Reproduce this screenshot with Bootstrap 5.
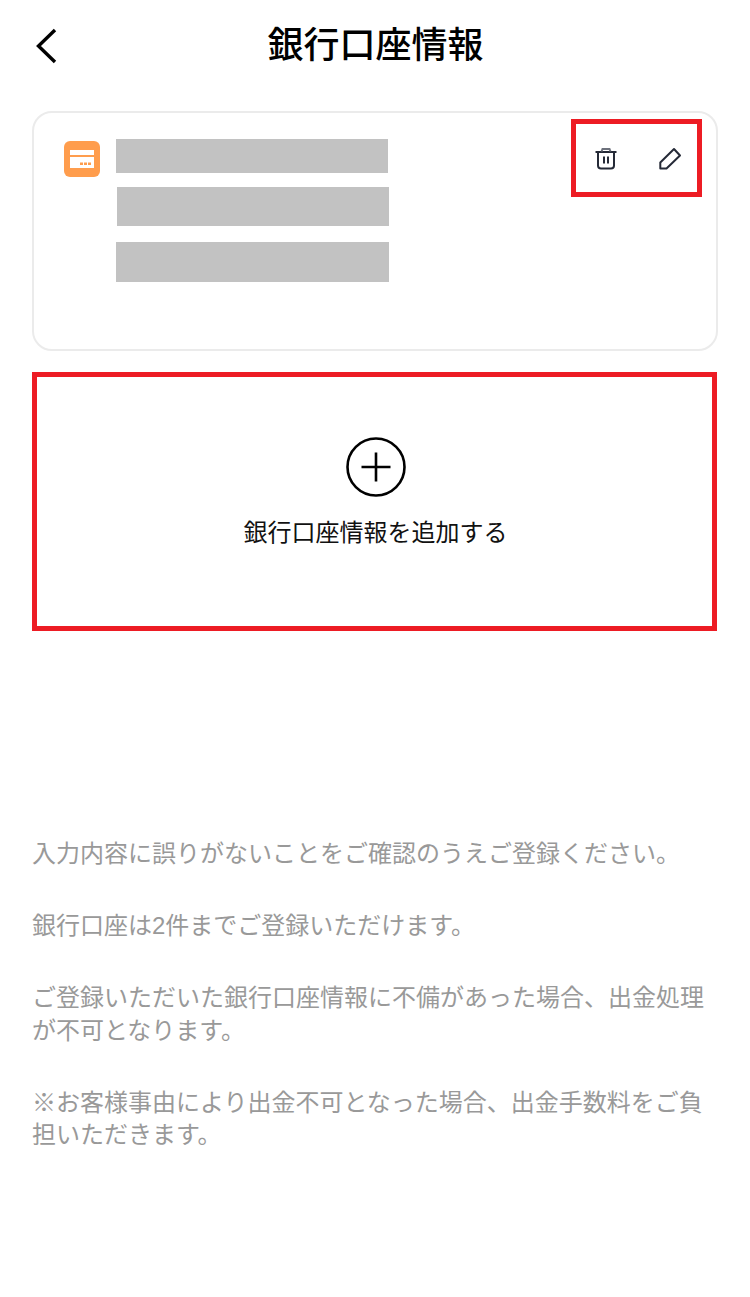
<!DOCTYPE html>
<html lang="ja">
<head>
  <meta charset="UTF-8">
  <meta name="viewport" content="width=device-width, initial-scale=1.0">
  <title>銀行口座情報</title>
  <link href="https://cdn.jsdelivr.net/npm/bootstrap@5.3.0/dist/css/bootstrap.min.css" rel="stylesheet">
  <style>
    body {
      font-family: "Liberation Sans", "Noto Sans CJK JP", sans-serif;
      background: #fff;
      color: #000;
    }
    .page-wrap {
      height: 1297px;
      padding: 0 32px;
    }
    .top-bar {
      height: 111px;
      padding-bottom: 19px;
    }
    .back-link {
      left: 3px;
      top: 27px;
      line-height: 0;
    }
    .page-title {
      font-size: 36px;
      font-weight: 500;
      line-height: 50px;
      margin: 0;
      padding-left: 1px;
    }
    .bank-card {
      height: 240px;
      border: 2px solid #ebebeb;
      border-radius: 20px;
      padding: 26px 0 0 30px;
    }
    .bank-icon {
      width: 36px;
      height: 36px;
      margin-top: 2px;
      margin-right: 16px;
    }
    .mask-bar {
      background: #c2c2c2;
      width: 272px;
    }
    .mask-a { height: 34px; margin-bottom: 14px; }
    .mask-b { height: 39px; margin-bottom: 16px; margin-left: 1px; }
    .mask-c { height: 40px; width: 273px; }
    .action-box {
      top: 6px;
      right: 14px;
      width: 131px;
      height: 78px;
      border: 5px solid #ed1c24;
      padding-left: 18px;
      gap: 40px;
    }
    .add-box {
      height: 259px;
      margin-top: 21px;
      margin-right: 1px;
      border: 5px solid #ed1c24;
      padding-top: 60px;
      padding-left: 2px;
    }
    .add-label {
      font-size: 24px;
      line-height: 34px;
      margin-top: 19px;
      color: #111;
    }
    .notes {
      margin-top: 207px;
      padding-right: 4px;
      font-size: 24px;
      line-height: 32.5px;
      color: #999;
    }
    .notes p {
      margin: 0 0 39.5px;
    }
  </style>
</head>
<body>
  <div class="page-wrap">
    <!-- header -->
    <div class="top-bar position-relative d-flex align-items-center justify-content-center">
      <a href="#" class="back-link position-absolute" aria-label="戻る">
        <svg width="24" height="38" viewBox="0 0 24 38" fill="none" stroke="#000" stroke-width="3.4">
          <path d="M20 3 L3.500 19 L20 35"/>
        </svg>
      </a>
      <h1 class="page-title">銀行口座情報</h1>
    </div>

    <!-- registered account -->
    <div class="bank-card position-relative d-flex align-items-start">
      <svg class="bank-icon flex-shrink-0" viewBox="0 0 36 36">
        <rect width="36" height="36" rx="6" fill="#ff9d4d"/>
        <rect x="6" y="9" width="24" height="5" fill="#fff"/>
        <rect x="6" y="16" width="24" height="11" fill="#fff"/>
        <rect x="16" y="21.5" width="3" height="2.5" fill="#ff9d4d"/>
        <rect x="20" y="21.5" width="3" height="2.5" fill="#ff9d4d"/>
        <rect x="24" y="21.5" width="3" height="2.5" fill="#ff9d4d"/>
      </svg>
      <div>
        <div class="mask-bar mask-a"></div>
        <div class="mask-bar mask-b"></div>
        <div class="mask-bar mask-c"></div>
      </div>
      <div class="action-box position-absolute d-flex align-items-center">
        <svg width="24" height="24" viewBox="0 0 24 24" fill="none" stroke="#252a37" stroke-width="2">
          <path d="M1.500 6 H22.500"/>
          <path d="M4 6 V19.500 Q4 22.500 7 22.500 H17 Q20 22.500 20 19.500 V6"/>
          <path d="M7.500 5.500 L8.500 3 H15.500 L16.500 5.500" stroke="#6d717c"/>
          <path d="M10 10.500 V17.500 M14 10.500 V17.500"/>
        </svg>
        <svg width="26" height="26" viewBox="0 0 26 26" fill="none" stroke="#252a37" stroke-width="2" stroke-linejoin="round">
          <path d="M2.300 17.500 L16 4 L22 10.500 L8.500 23.500 H2.300 Z"/>
        </svg>
      </div>
    </div>

    <!-- add account -->
    <a href="#" class="add-box d-flex flex-column align-items-center text-decoration-none">
      <svg width="60" height="60" viewBox="0 0 60 60" fill="none" stroke="#000">
        <circle cx="30" cy="30" r="28.500" stroke-width="2.600"/>
        <path d="M15.500 30 H44.500 M30 15.500 V44.500" stroke-width="2.600"/>
      </svg>
      <div class="add-label">銀行口座情報を追加する</div>
    </a>

    <!-- notes -->
    <div class="notes">
      <p>入力内容に誤りがないことをご確認のうえご登録ください。</p>
      <p>銀行口座は2件までご登録いただけます。</p>
      <p>ご登録いただいた銀行口座情報に不備があった場合、出金処理が不可となります。</p>
      <p>※お客様事由により出金不可となった場合、出金手数料をご負担いただきます。</p>
    </div>
  </div>
  <script src="https://cdn.jsdelivr.net/npm/bootstrap@5.3.0/dist/js/bootstrap.bundle.min.js"></script>
</body>
</html>
